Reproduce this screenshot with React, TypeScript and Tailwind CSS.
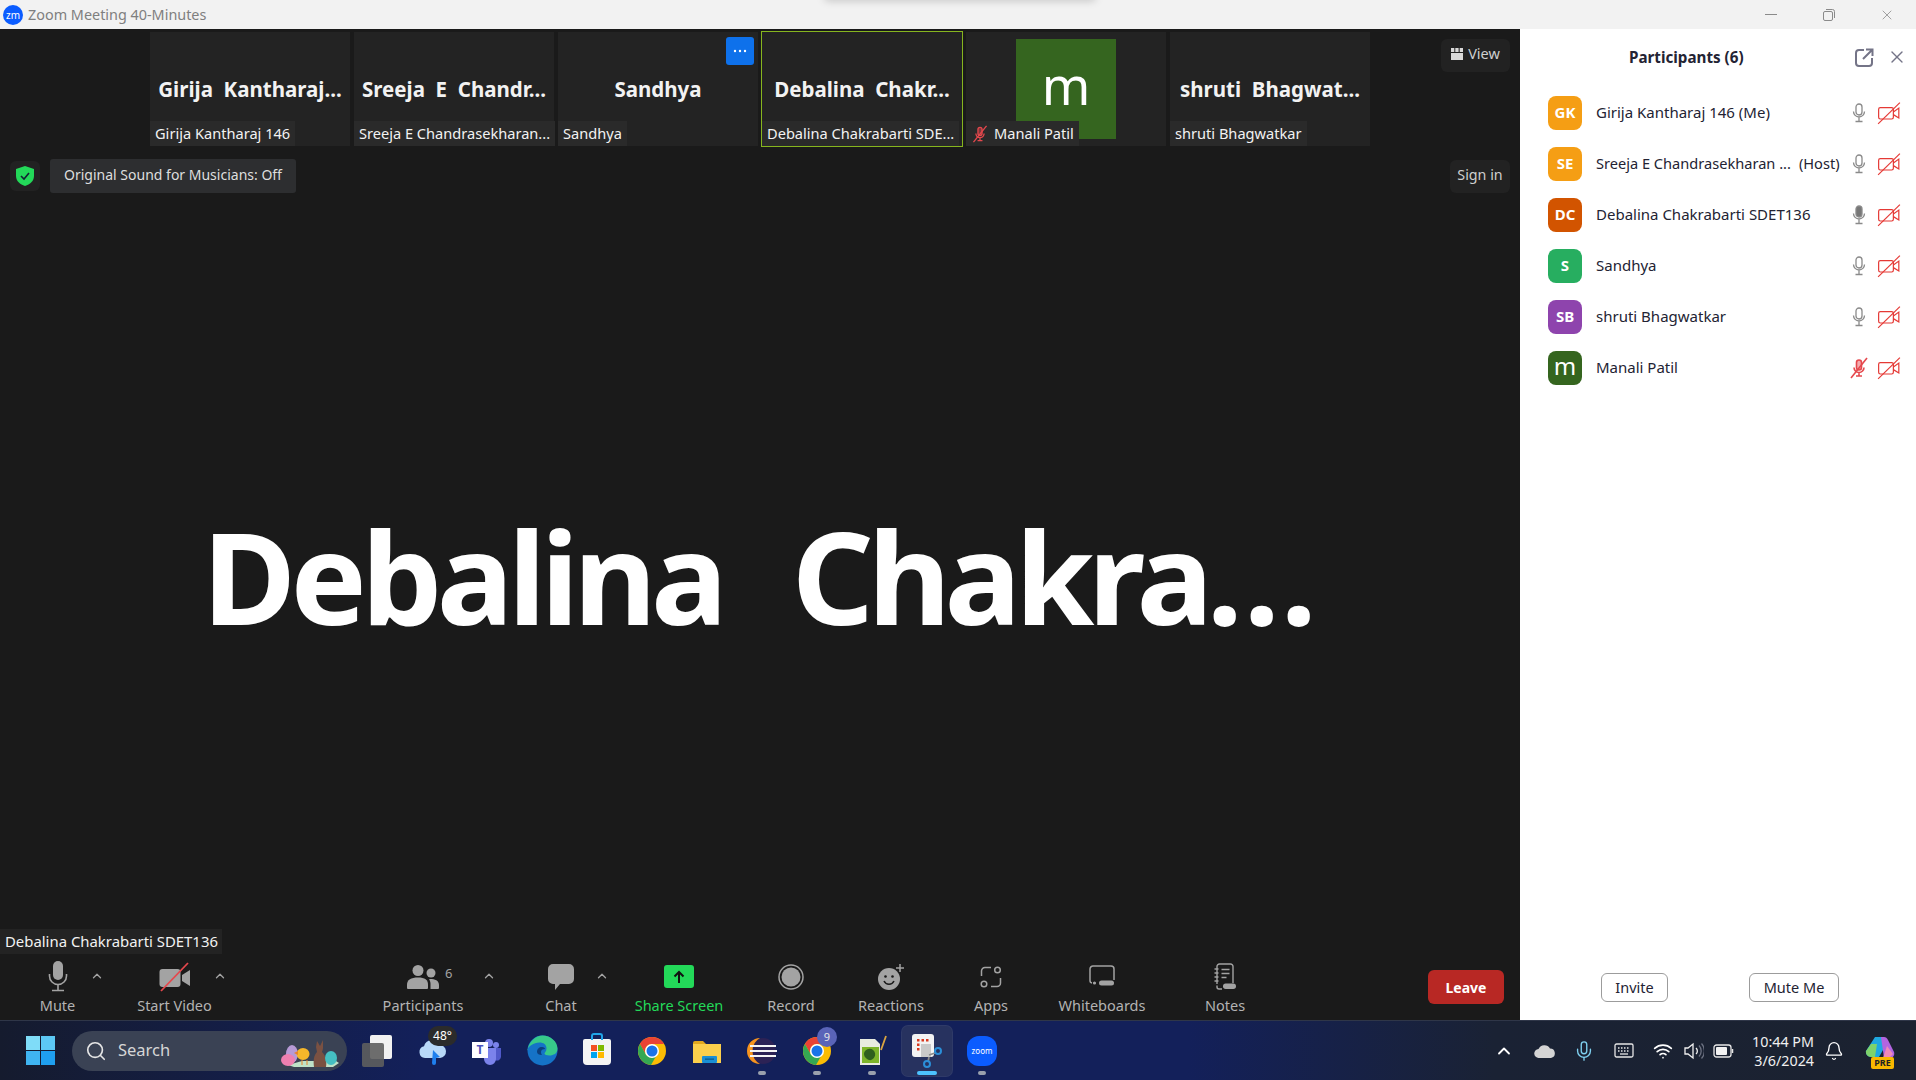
import React from "react";
import { Bell, ChevronUp, Mic, Search, Wifi, X } from "lucide-react";

const tiles = [
  { big: "Girija\u00a0\u00a0Kantharaj...", name: "Girija Kantharaj 146" },
  { big: "Sreeja\u00a0\u00a0E\u00a0\u00a0Chandr...", name: "Sreeja E Chandrasekharan..." },
  { big: "Sandhya", name: "Sandhya", more: true },
  { big: "Debalina\u00a0\u00a0Chakr...", name: "Debalina Chakrabarti SDE...", active: true },
  { avatar: "m", name: "Manali Patil", muted: true },
  { big: "shruti\u00a0\u00a0Bhagwat...", name: "shruti Bhagwatkar" },
];

const people = [
  { initials: "GK", color: "bg-[#f59e14]", name: "Girija Kantharaj 146 (Me)" },
  { initials: "SE", color: "bg-[#f59e14]", name: "Sreeja E Chandrasekharan ...", host: true },
  { initials: "DC", color: "bg-[#d25400]", name: "Debalina Chakrabarti SDET136", talking: true },
  { initials: "S", color: "bg-[#27ae60]", name: "Sandhya" },
  { initials: "SB", color: "bg-[#8e44ad]", name: "shruti Bhagwatkar" },
  { initials: "m", color: "bg-[#35651f]", name: "Manali Patil", muted: true, large: true },
];

const MutedMic = ({ size = 22 }: { size?: number }) => (
  <svg width={size} height={size} viewBox="0 0 22 22" fill="none" stroke="#e5484d" strokeWidth="1.6">
    <rect x="8.500" y="3" width="5" height="10" rx="2.500" fill="#e5484d" fillOpacity="0.45" />
    <path d="M6 10.500a5 5 0 0 0 10 0M11 15.500V19M8 19h6" />
    <path d="M19 1 3 21" />
  </svg>
);

const VideoOffRed = () => (
  <svg width="24" height="24" viewBox="0 0 22 22" fill="none" stroke="#e53935" strokeWidth="1.100">
    <rect x="1.500" y="6" width="13.500" height="10.500" rx="1.500" />
    <path d="m15 10 5-3.500v9L15 12.500" />
    <path d="M21 1.500 1 21" />
  </svg>
);

const PanelMic = ({ talking }: { talking?: boolean }) => (
  <svg width="14" height="20" viewBox="0 0 14 20" fill="none" stroke="#8a8a8a" strokeWidth="1.300">
    <rect x="4" y="1" width="6" height="11" rx="3" fill={talking ? "#777" : "none"} />
    <path d="M1.500 8.500a5.500 5.500 0 0 0 11 0M7 14v4M3.500 18.500h7" />
  </svg>
);

const ToolMic = () => (
  <svg width="20" height="32" viewBox="0 0 20 32" fill="#a3a3a3">
    <rect x="5" y="0" width="10" height="19" rx="5" />
    <path d="M1.500 13v2a8.500 8.500 0 0 0 17 0v-2" fill="none" stroke="#a3a3a3" strokeWidth="1.600" />
    <path d="M10 24v5M4 29.500h12" stroke="#a3a3a3" strokeWidth="1.600" />
  </svg>
);

const ToolVideo = () => (
  <svg width="32" height="30" viewBox="0 0 32 30">
    <rect x="0.500" y="7" width="21" height="18" rx="3" fill="#a3a3a3" />
    <path d="m23 13 8-5v16l-8-5z" fill="#a3a3a3" />
    <path d="M29 1 2 29" stroke="#e5484d" strokeWidth="1.800" />
  </svg>
);

const ToolPeople = () => (
  <svg width="32" height="26" viewBox="0 0 32 26" fill="#a3a3a3">
    <circle cx="11" cy="6.500" r="5.500" />
    <circle cx="24" cy="9" r="4.500" />
    <path d="M0 24v-3.500C0 16 4 13.500 11 13.500S21 16 21 20.500V24a1 1 0 0 1-1 1H1a1 1 0 0 1-1-1Z" />
    <path d="M23 15c5 0 9 1.500 9 6v3a1 1 0 0 1-1 1h-7.500v-5c0-2-.5-3.500-1.500-4.800Z" />
  </svg>
);

const ToolChat = () => (
  <svg width="26" height="26" viewBox="0 0 26 26" fill="#a3a3a3">
    <path d="M5 0h16a5 5 0 0 1 5 5v10a5 5 0 0 1-5 5h-9l-5 6v-6H5a5 5 0 0 1-5-5V5a5 5 0 0 1 5-5Z" />
  </svg>
);

const ToolShare = () => (
  <div className="flex h-[23px] w-[30px] items-center justify-center rounded-[3px] bg-[#23d959]">
    <svg width="12" height="14" viewBox="0 0 12 14" fill="none" stroke="#111" strokeWidth="2">
      <path d="M6 13V2M1.500 6.500 6 2l4.500 4.500" />
    </svg>
  </div>
);

const ToolRecord = () => (
  <svg width="26" height="26" viewBox="0 0 26 26">
    <circle cx="13" cy="13" r="12" fill="none" stroke="#a3a3a3" strokeWidth="1.500" />
    <circle cx="13" cy="13" r="9.500" fill="#a3a3a3" />
  </svg>
);

const ToolReactions = () => (
  <svg width="28" height="28" viewBox="0 0 28 28">
    <circle cx="12" cy="16" r="11" fill="#a3a3a3" />
    <circle cx="8.500" cy="13.500" r="1.300" fill="#1a1a1a" />
    <circle cx="15.500" cy="13.500" r="1.300" fill="#1a1a1a" />
    <path d="M7 18a5.500 5.500 0 0 0 10 0" fill="none" stroke="#1a1a1a" strokeWidth="1.500" />
    <path d="M23 1v8M19 5h8" stroke="#a3a3a3" strokeWidth="1.500" />
  </svg>
);

const ToolApps = () => (
  <svg width="22" height="22" viewBox="0 0 22 22" fill="none" stroke="#a3a3a3" strokeWidth="1.500">
    <circle cx="17.500" cy="4" r="2.800" />
    <circle cx="4" cy="18" r="2.800" />
    <path d="M1.500 10V5a3.500 3.500 0 0 1 3.500-3.500h6M20.500 12v5a3.500 3.500 0 0 1-3.500 3.500h-6" />
  </svg>
);

const ToolWhiteboard = () => (
  <svg width="26" height="24" viewBox="0 0 26 24" fill="none" stroke="#a3a3a3" strokeWidth="1.500">
    <path d="M3 18a2.500 2.500 0 0 1-2-2.500V4a3 3 0 0 1 3-3h18a3 3 0 0 1 3 3v11" />
    <rect x="10" y="15.500" width="15" height="5" rx="2.500" fill="#a3a3a3" stroke="none" />
    <circle cx="5.500" cy="18" r="0.800" fill="#a3a3a3" />
  </svg>
);

const ToolNotes = () => (
  <svg width="24" height="28" viewBox="0 0 24 28" fill="none" stroke="#a3a3a3" strokeWidth="1.400">
    <path d="M4 21V3.500A2.500 2.500 0 0 1 6.500 1h11A2.500 2.500 0 0 1 20 3.500V20" />
    <path d="M1.500 6h4M1.500 10h4M1.500 14h4M1.500 18h4M8.500 6.500h8M8.500 10.500h8M8.500 14.500h5" />
    <path d="M4 22.500V24a2 2 0 0 0 2 2h3" />
    <rect x="10" y="20.500" width="13" height="5.500" rx="2.700" fill="#a3a3a3" stroke="none" />
  </svg>
);

type ToolProps = {
  label: string;
  width: string;
  icon: React.ReactNode;
  chevron?: string;
  green?: boolean;
  count?: string;
};

const Tool = ({ label, width, icon, chevron, green, count }: ToolProps) => (
  <div className={`relative flex shrink-0 flex-col items-center ${width}`}>
    <div className="relative flex h-[39px] items-center justify-center">
      {icon}
      {count && <span className="absolute left-[calc(100%+6px)] top-[7px] text-[13px] text-[#a3a3a3]">{count}</span>}
    </div>
    <span className={`-mt-[1px] text-[14.500px] leading-5 ${green ? "text-[#23d959]" : "text-[#b3b3b3]"}`}>{label}</span>
    {chevron && <ChevronUp className={`absolute top-[12px] h-[14px] w-[14px] text-[#a3a3a3] ${chevron}`} strokeWidth={2.2} />}
  </div>
);

const ChromeIcon = () => (
  <svg width="30" height="30" viewBox="0 0 30 30">
    <circle cx="15" cy="15" r="14" fill="#fbbc04" />
    <path d="M15 1a14 14 0 0 0-12.100 7l6 10.500A7 7 0 0 1 15 8h12.100A14 14 0 0 0 15 1Z" fill="#ea4335" />
    <path d="M2.900 8A14 14 0 0 0 14 29l6-10.500a7 7 0 0 1-11.100 0Z" fill="#34a853" />
    <circle cx="15" cy="15" r="7" fill="#fff" />
    <circle cx="15" cy="15" r="5.500" fill="#1a73e8" />
  </svg>
);

const TaskIcon = ({ children, dot, active }: { children: React.ReactNode; dot?: boolean; active?: boolean }) => (
  <div className={`relative flex h-[50px] w-[50px] shrink-0 items-center justify-center rounded-md ${active ? "bg-[#27325f] ring-1 ring-[#2f3a68]" : ""}`}>
    {children}
    {dot && <span className="absolute bottom-[1px] left-[21px] h-[4px] w-[8px] rounded-full bg-[#9aa0ad]" />}
    {active && <span className="absolute bottom-[1px] left-[15px] h-[4px] w-[20px] rounded-full bg-[#4cc2ff]" />}
  </div>
);

const App = () => {
  return (
    <div className="flex h-[1080px] w-[1916px] flex-col overflow-hidden bg-white font-['Noto_Sans',sans-serif]">
      {/* title bar */}
      <div className="relative flex h-[29px] shrink-0 items-center bg-[#f2f2f2]">
        <div className="ml-[3px] flex h-[20px] w-[20px] items-center justify-center rounded-full bg-[#0b5cff] text-[10px] leading-none text-white">zm</div>
        <span className="ml-[5px] text-[14.400px] text-[#7f7f7f]">Zoom Meeting 40-Minutes</span>
        <div className="absolute left-[825px] top-[-6px] h-[6px] w-[270px] shadow-[0_0_8px_rgba(0,0,0,0.25)]" />
        <div className="ml-auto flex items-center">
          <div className="flex w-[58px] justify-center"><div className="h-[1px] w-[12px] bg-[#8a8a8a]" /></div>
          <div className="flex w-[58px] justify-center">
            <svg width="12" height="12" viewBox="0 0 12 12" fill="none" stroke="#8a8a8a"><rect x="0.500" y="2.500" width="9" height="9" rx="1.500" /><path d="M3 .5h6.500a2 2 0 0 1 2 2V9" /></svg>
          </div>
          <div className="flex w-[58px] justify-center"><X className="h-[16px] w-[16px] text-[#8a8a8a]" strokeWidth={1.2} /></div>
        </div>
      </div>

      <div className="flex h-[991px] shrink-0">
        {/* meeting */}
        <div className="relative flex w-[1520px] shrink-0 flex-col bg-[#1a1a1a] text-white">
          <div className="mt-[3px] flex justify-center gap-1">
            {tiles.map((t) => (
              <div key={t.name} className={`relative flex h-[114px] w-[200px] items-center justify-center bg-[#232323] ${t.active ? "outline outline-1 outline-[#86b51e]" : ""}`}>
                {t.big && <span className="whitespace-nowrap text-[20.500px] font-bold text-[#f2f2f2]">{t.big}</span>}
                {t.avatar && (
                  <div className="flex h-[100px] w-[100px] items-center justify-center bg-[#35651f] text-[52px] leading-none">
                    <span className="mb-[8px]">{t.avatar}</span>
                  </div>
                )}
                {t.more && (
                  <div className="absolute right-[4px] top-[5px] flex h-[28px] w-[28px] items-center justify-center rounded-[3px] bg-[#0e71eb]">
                    <svg width="14" height="4" viewBox="0 0 14 4" fill="#fff"><circle cx="2" cy="2" r="1.200" /><circle cx="7" cy="2" r="1.200" /><circle cx="12" cy="2" r="1.200" /></svg>
                  </div>
                )}
                <div className="absolute bottom-0 left-0 flex h-[25px] items-center gap-[5px] bg-[#2a2a2a] px-[5px] pt-[1px] text-[14.600px] text-[#f2f2f2]">
                  {t.muted && <MutedMic size={18} />}
                  <span className="whitespace-nowrap">{t.name}</span>
                </div>
              </div>
            ))}
          </div>

          <div className="absolute right-[10px] top-[10px] flex h-[33px] w-[69px] items-center justify-center gap-[5px] rounded-md bg-[#222222] pb-[3px] text-[14.500px] text-[#cfcfcf]">
            <svg width="12" height="12" viewBox="0 0 12 12" fill="#d9d9d9"><rect y="5" width="12" height="7" /><rect width="3.300" height="4" /><rect x="4.300" width="3.300" height="4" /><rect x="8.700" width="3.300" height="4" /></svg>
            View
          </div>

          <div className="mt-[13px] flex h-[34px] items-center px-[10px]">
            <div className="flex h-[30px] w-[30px] items-center justify-center rounded-md bg-[#222222]">
              <svg width="18" height="20" viewBox="0 0 18 20"><path d="M9 0 18 3v7c0 5-4 8.500-9 10C4 18.500 0 15 0 10V3Z" fill="#23d959" /><path d="m5 10 3 3 5-6" fill="none" stroke="#123" strokeWidth="1.600" /></svg>
            </div>
            <div className="ml-[10px] flex h-[34px] w-[246px] items-center justify-center rounded-[3px] bg-[#2d2e30] pb-[3px] text-[14px] text-[#dedede]">Original Sound for Musicians: Off</div>
            <div className="ml-auto flex h-[33px] w-[60px] items-center justify-center rounded-md bg-[#222222] pb-[3px] text-[14.300px] text-[#cfcfcf]">Sign in</div>
          </div>

          <div className="flex flex-1 items-center justify-center pt-[30px]">
            <span className="whitespace-nowrap text-[128px] font-bold leading-none text-white">
              <span className="tracking-[-5.500px]">Debalina</span>
              <span className="tracking-[1.500px]">{"\u00a0\u00a0"}</span>
              <span className="tracking-[-6.300px]">Chakra</span>
              <span className="tracking-[1px]">...</span>
            </span>
          </div>

          <div className="flex h-[25px] w-[222px] items-center bg-[#232323] pl-[5px] text-[14.900px] text-[#f2f2f2]">Debalina Chakrabarti SDET136</div>

          {/* toolbar */}
          <div className="flex h-[66px] items-start pt-[3px]">
            <Tool label="Mute" width="w-[115px]" icon={<ToolMic />} chevron="left-[90px]" />
            <Tool label="Start Video" width="w-[119px]" icon={<ToolVideo />} chevron="left-[98px]" />
            <div className="w-[124px] shrink-0" />
            <Tool label="Participants" width="w-[130px]" icon={<ToolPeople />} count="6" chevron="left-[124px]" />
            <div className="w-[28px] shrink-0" />
            <Tool label="Chat" width="w-[90px]" icon={<ToolChat />} chevron="left-[79px]" />
            <div className="w-[8px] shrink-0" />
            <Tool label="Share Screen" width="w-[130px]" icon={<ToolShare />} green />
            <Tool label="Record" width="w-[94px]" icon={<ToolRecord />} />
            <Tool label="Reactions" width="w-[106px]" icon={<ToolReactions />} />
            <Tool label="Apps" width="w-[94px]" icon={<ToolApps />} />
            <Tool label="Whiteboards" width="w-[128px]" icon={<ToolWhiteboard />} />
            <Tool label="Notes" width="w-[118px]" icon={<ToolNotes />} />
            <div className="ml-auto mr-[16px] mt-[13px] flex h-[34px] w-[76px] items-center justify-center rounded-md bg-[#b82824] text-[14px] font-bold text-white">Leave</div>
          </div>
        </div>

        {/* participants */}
        <div className="flex w-[396px] shrink-0 flex-col bg-white">
          <div className="relative flex h-[58px] items-center pb-[2px] pl-[109px]">
            <span className="text-[15.200px] font-bold text-[#232333]">Participants (6)</span>
            <svg className="absolute left-[335px] top-[19px]" width="19" height="19" viewBox="0 0 19 19" fill="none" stroke="#747487" strokeWidth="2">
              <path d="M9 2H4a3 3 0 0 0-3 3v10a3 3 0 0 0 3 3h10a3 3 0 0 0 3-3v-5M8 11l9-9M11 1.500h6.500V8" />
            </svg>
            <X className="absolute left-[367px] top-[18px] h-[20px] w-[20px] text-[#747487]" strokeWidth={1.6} />
          </div>
          <div className="flex flex-col pl-[28px]">
            {people.map((p) => (
              <div key={p.name} className="flex h-[51px] items-center">
                <div className={`flex h-[34px] w-[34px] shrink-0 items-center justify-center rounded-lg text-white ${p.color} ${p.large ? "text-[24px] font-normal" : "text-[15px] font-bold"}`}>
                  <span className={p.large ? "mb-[3px]" : ""}>{p.initials}</span>
                </div>
                <span className={`ml-[14px] whitespace-nowrap text-[#232333] ${p.host ? "text-[14.600px]" : "text-[15px]"}`}>{p.name}</span>
                {p.host && <span className="ml-[8px] whitespace-nowrap text-[14.600px] text-[#232333]">(Host)</span>}
                <div className="ml-auto mr-[15px] flex items-center gap-[11px]">
                  <div className="flex w-[14px] justify-center">
                    {p.muted ? <div className="shrink-0"><MutedMic size={22} /></div> : <PanelMic talking={p.talking} />}
                  </div>
                  <VideoOffRed />
                </div>
              </div>
            ))}
          </div>
          <div className="mt-auto flex h-[47px] items-start pl-[81px] text-[14.500px] text-[#232333]">
            <div className="flex h-[29px] w-[67px] items-center justify-center rounded-md border border-[#9c9c9c]">Invite</div>
            <div className="ml-[81px] flex h-[29px] w-[90px] items-center justify-center rounded-md border border-[#9c9c9c]">Mute Me</div>
          </div>
        </div>
      </div>

      {/* taskbar */}
      <div className="flex h-[60px] shrink-0 items-center border-t border-[#2f3648] bg-[linear-gradient(90deg,#151b2e_0%,#13205a_22%,#13205a_62%,#1a2234_78%,#1b2230_100%)] text-white">
        <div className="ml-[26px] grid h-[29px] w-[29px] shrink-0 grid-cols-2 gap-[1px]">
          <span className="bg-[#7fdcf8]" /><span className="bg-[#5cc8f5]" /><span className="bg-[#3fb4f2]" /><span className="bg-[#1f9fef]" />
        </div>
        <div className="relative ml-[17px] flex h-[40px] w-[275px] shrink-0 items-center rounded-full bg-[#3a4254] pl-[13px]">
          <Search className="h-[22px] w-[22px] text-[#e6e6e6]" strokeWidth={1.8} />
          <span className="ml-[11px] text-[16.500px] text-[#d6d6d6]">Search</span>
          <svg className="absolute right-[7px] top-[9px]" width="60" height="28" viewBox="0 0 60 28">
            <path d="M8 25 22 21h34l3 2-6 4H14Z" fill="#bfe2c8" />
            <ellipse cx="12" cy="14" rx="6" ry="9" fill="#b79ad6" />
            <ellipse cx="8" cy="20" rx="7" ry="6" fill="#ee7fb0" />
            <ellipse cx="23" cy="14" rx="6.500" ry="6" fill="#f6b72a" />
            <path d="m18 11-4 2 4 2Z" fill="#e8822a" />
            <path d="M22 20v5M27 20v5" stroke="#e8822a" strokeWidth="1" />
            <path d="M34 27c-1-7 0-12 3-15l-1-5 1-6 3 5 3-6 0 8c0 2-1 3-1 4 4 4 5 10 4 15Z" fill="#7a5142" />
            <ellipse cx="51" cy="18" rx="6" ry="7" fill="#45bfc2" />
          </svg>
        </div>
        <div className="ml-[5px] flex items-center gap-[5px]">
          <TaskIcon>
            <div className="relative h-[36px] w-[30px]">
              <div className="absolute right-0 top-[2px] h-[24px] w-[22px] rounded-[2px] bg-[#f1f1f1]" />
              <div className="absolute bottom-[2px] left-0 h-[24px] w-[22px] rounded-[2px] bg-[#5e5e5e]/90" />
            </div>
          </TaskIcon>
          <TaskIcon>
            <svg width="30" height="30" viewBox="0 0 30 30"><path d="M8 22a6 6 0 0 1-1-11.800A8 8 0 0 1 22 9a6.500 6.500 0 0 1 1 13Z" fill="#b8d8f8" /><path d="M16 14l7 7-4 1v5a2 2 0 0 1-4 0Z" fill="#1f7fee" /></svg>
            <span className="absolute left-[21px] top-[0px] flex h-[20px] w-[29px] items-center justify-center rounded-full bg-[#2b2b2b] text-[12px] leading-none">48°</span>
          </TaskIcon>
          <TaskIcon>
            <svg width="30" height="30" viewBox="0 0 30 30"><circle cx="24" cy="9" r="3" fill="#7b83eb" /><circle cx="17" cy="7" r="4" fill="#7b83eb" /><path d="M20 12h9v9a4 4 0 0 1-6 3Z" fill="#5059c9" /><path d="M11 12h13v11a6 6 0 0 1-12 0Z" fill="#7b83eb" /></svg>
            <span className="absolute left-[10px] top-[16px] flex h-[16px] w-[16px] items-center justify-center bg-white text-[12px] font-bold leading-none text-[#4b53bc]">T</span>
          </TaskIcon>
          <TaskIcon>
            <svg width="31" height="31" viewBox="0 0 31 31"><circle cx="15.500" cy="15.500" r="15" fill="#1573c7" /><path d="M.5 15C2 6 9 .5 15.500 .5c8 0 15 6 15 13 0 5-4 7-8 7-3 0-5-1-5-2 0-1 2-2 2-5 0-4-3-6-7-6-6 0-11 4-12.500 7.500Z" fill="#37c98a" /><path d="M10 17c0-3 2-5 5-5 2 0 3 1 3 2-4 0-5 3-3 6-3 0-5-1-5-3Z" fill="#0c3f7d" /></svg>
          </TaskIcon>
          <TaskIcon>
            <div className="relative mt-[2px] flex h-[26px] w-[28px] items-center justify-center rounded-b-[4px] rounded-t-[2px] bg-[#f4f4f4]">
              <div className="absolute left-[8px] top-[-6px] h-[7px] w-[12px] rounded-t-[3px] border-x-2 border-t-2 border-[#21a4e8]" />
              <div className="grid grid-cols-2 gap-[1px]">
                <span className="h-[6px] w-[6px] bg-[#f25022]" /><span className="h-[6px] w-[6px] bg-[#7fba00]" /><span className="h-[6px] w-[6px] bg-[#00a4ef]" /><span className="h-[6px] w-[6px] bg-[#ffb900]" />
              </div>
            </div>
          </TaskIcon>
          <TaskIcon><ChromeIcon /></TaskIcon>
          <TaskIcon>
            <svg width="30" height="30" viewBox="0 0 30 30"><path d="M1 7a2 2 0 0 1 2-2h8l3 3h-13Z" fill="#e2a81e" /><rect x="1" y="8" width="28" height="19" fill="#fbcf4c" /><rect x="10" y="20" width="15" height="7" rx="1" fill="#1a8fd6" /><rect x="13" y="22.500" width="9" height="1.300" fill="#0d5a8a" /></svg>
          </TaskIcon>
          <TaskIcon dot>
            <svg width="30" height="30" viewBox="0 0 30 30"><circle cx="16" cy="15" r="13" fill="#2c2255" /><path d="M13 2A13 13 0 0 0 13 28 15 15 0 0 1 13 2Z" fill="#f7941e" /><path d="M3 10h26M3 15h27M3 20h26" stroke="#f5f5f5" strokeWidth="2" /></svg>
          </TaskIcon>
          <TaskIcon dot>
            <ChromeIcon />
            <span className="absolute left-[25px] top-[1px] flex h-[20px] w-[20px] items-center justify-center rounded-full bg-[#5a64b8] text-[11px] leading-none text-[#e6e6e6]">9</span>
          </TaskIcon>
          <TaskIcon dot>
            <svg width="30" height="32" viewBox="0 0 30 32"><path d="M3 4h15l5 5v21H3Z" fill="#e8ece0" /><rect x="5" y="12" width="17" height="16" fill="#7db52a" /><path d="M8 16c4-4 9-2 10 2s-3 8-6 7-7-5-4-9Z" fill="#2f5f1d" /><path d="m29 1-5 14" stroke="#d9a441" strokeWidth="1.800" /></svg>
          </TaskIcon>
          <TaskIcon active>
            <svg width="32" height="36" viewBox="0 0 32 36"><rect x="1" y="1" width="22" height="23" rx="3" fill="#f3f3f3" /><path d="M6 6h2.500v2.500H6zM10.500 6H13v2.500h-2.500zM15 6h2.500v2.500H15zM6 10.500h2.500V13H6zM6 15h2.500v2.500H6z" fill="#d9381e" /><rect x="10" y="11" width="10" height="13" fill="#c9c9c9" /><path d="m18 24-1 5M18 22l6-2" stroke="#8a8a8a" strokeWidth="1.800" /><circle cx="27" cy="18" r="3" fill="none" stroke="#2b8fd8" strokeWidth="2" /><circle cx="16" cy="31" r="3" fill="none" stroke="#2b8fd8" strokeWidth="2" /></svg>
          </TaskIcon>
          <TaskIcon dot>
            <div className="flex h-[30px] w-[30px] items-center justify-center rounded-[12px] bg-[#0b5cff] text-[8px] leading-none text-white">zoom</div>
          </TaskIcon>
        </div>
        {/* tray */}
        <div className="ml-auto flex items-center">
          <ChevronUp className="h-[20px] w-[20px] text-white" strokeWidth={2.2} />
          <svg className="ml-[20px]" width="22" height="14" viewBox="0 0 22 14"><path d="M5 14a4.500 4.500 0 0 1-.5-9A6.500 6.500 0 0 1 16 4.500a4.800 4.800 0 0 1 1 9.500Z" fill="#d4d4d4" /></svg>
          <Mic className="ml-[17px] h-[22px] w-[22px] text-[#7fd0ef]" strokeWidth={1.5} />
          <svg className="ml-[19px]" width="20" height="15" viewBox="0 0 20 15" fill="none" stroke="#e6e6e6" strokeWidth="1.300"><rect x="1" y="1" width="18" height="13" rx="1.500" /><path d="M4 5h12M4 8h12" strokeDasharray="1.500 1.500" /><path d="M6 11h8" /></svg>
          <Wifi className="ml-[19px] h-[20px] w-[20px] text-white" strokeWidth={2} />
          <svg className="ml-[11px]" width="20" height="20" viewBox="0 0 20 20" fill="none" stroke="#f0f0f0" strokeWidth="1.300">
            <path d="M1 7v6h3l5 4V3L4 7Z" />
            <path d="M12 7a4 4 0 0 1 0 6" />
            <path d="M15 4.500a8 8 0 0 1 0 11M17.500 2.500a11 11 0 0 1 0 15" stroke="#6b7080" />
          </svg>
          <svg className="ml-[9px]" width="21" height="14" viewBox="0 0 21 14" fill="none"><rect x="1" y="1" width="17" height="12" rx="2.500" stroke="#e6e6e6" strokeWidth="1.300" /><rect x="3" y="3" width="11" height="8" rx="1" fill="#f2f2f2" /><path d="M19.500 5v4" stroke="#e6e6e6" strokeWidth="1.500" /></svg>
          <div className="ml-[8px] flex w-[72px] flex-col items-end text-[14.300px] leading-[19px] text-[#f0f0f0]">
            <span>10:44 PM</span>
            <span>3/6/2024</span>
          </div>
          <Bell className="ml-[10px] h-[20px] w-[20px] text-white" strokeWidth={1.6} />
          <div className="relative ml-[21px] mr-[21px] h-[30px] w-[30px]">
            <svg width="30" height="28" viewBox="0 0 30 28"><path d="M10 1h9l3 6-8 14H6a5 5 0 0 1-5-6Z" fill="#1fa8e0" /><path d="M6 8h6l-2 13H6a5 5 0 0 1-5-6Z" fill="#7ed36b" /><path d="M16 1h3c2 0 3 1 4 3l6 12c1 3-1 6-4 6h-6Z" fill="#b265e0" /><path d="M22 10l6 8-4 4h-6Z" fill="#f08ab8" /></svg>
            <span className="absolute bottom-[-3px] left-[6px] flex h-[12px] w-[23px] items-center justify-center rounded-[2px] bg-[#f9b800] text-[9px] font-bold leading-none text-[#222]">PRE</span>
          </div>
        </div>
      </div>
    </div>
  );
};

export default App;
